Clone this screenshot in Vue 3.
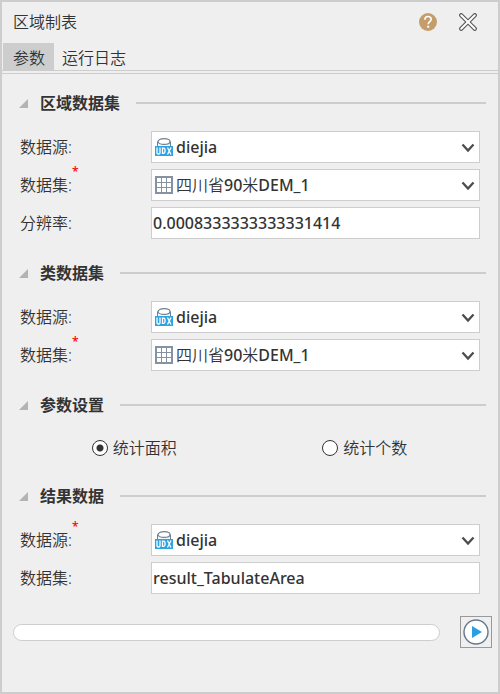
<script setup>
import { ref, reactive } from 'vue'

const tab = ref('params')
const stat = ref('area')
const sections = reactive([
  {
    id: 'zone',
    title: '区域数据集',
    fields: [
      { id: 'zone-source', label: '数据源:', kind: 'source', value: 'diejia' },
      { id: 'zone-dataset', label: '数据集:', kind: 'grid', value: '四川省90米DEM_1', required: true },
      { id: 'zone-res', label: '分辨率:', kind: 'text', value: '0.0008333333333331414' }
    ]
  },
  {
    id: 'class',
    title: '类数据集',
    fields: [
      { id: 'class-source', label: '数据源:', kind: 'source', value: 'diejia' },
      { id: 'class-dataset', label: '数据集:', kind: 'grid', value: '四川省90米DEM_1', required: true }
    ]
  },
  {
    id: 'options',
    title: '参数设置',
    radios: [
      { value: 'area', label: '统计面积' },
      { value: 'count', label: '统计个数' }
    ]
  },
  {
    id: 'result',
    title: '结果数据',
    fields: [
      { id: 'result-source', label: '数据源:', kind: 'source', value: 'diejia', required: true },
      { id: 'result-dataset', label: '数据集:', kind: 'text', value: 'result_TabulateArea' }
    ]
  }
])
</script>

<template>
  <main class="dialog">
    <header class="titlebar">
      <h1>区域制表</h1>
      <button class="icon-btn" type="button" aria-label="帮助">
        <svg width="18" height="18" viewBox="0 0 18 18">
          <circle cx="9" cy="9" r="9" fill="#c49d6b" />
          <path d="M5.9 6.7C5.9 4.6 7.1 3.5 9 3.5s3.2 1.1 3.2 2.8c0 2.3-3 2.4-3 5" fill="none" stroke="#fff" stroke-width="1.6" />
          <rect x="8.2" y="12.7" width="2" height="2" fill="#fff" />
        </svg>
      </button>
      <button class="icon-btn" type="button" aria-label="关闭">
        <svg width="18" height="18" viewBox="0 0 18 18" fill="none" stroke-linecap="round">
          <path d="M2.2 2.2l13.6 13.6M15.8 2.2L2.2 15.8" stroke="#555" stroke-width="4.2" />
          <path d="M2.2 2.2l13.6 13.6M15.8 2.2L2.2 15.8" stroke="#fff" stroke-width="2" />
        </svg>
      </button>
    </header>

    <nav class="tabs">
      <button type="button" :class="{ active: tab === 'params' }" @click="tab = 'params'">参数</button>
      <button type="button" :class="{ active: tab === 'log' }" @click="tab = 'log'">运行日志</button>
    </nav>

    <form class="panel" @submit.prevent>
      <section v-for="s in sections" :key="s.id">
        <h2>
          <svg width="9" height="9" viewBox="0 0 9 9"><path d="M9 0v9H0z" fill="#b3b3b3" /></svg>
          <span>{{ s.title }}</span>
        </h2>

        <div v-if="s.fields" class="rows">
          <div v-for="f in s.fields" :key="f.id" class="row">
            <div class="caption">
              <label :for="f.id">{{ f.label }}</label>
              <span v-if="f.required" class="star">*</span>
            </div>
            <input v-if="f.kind === 'text'" :id="f.id" v-model="f.value" class="field" type="text" />
            <div v-else class="combo">
              <select :id="f.id" v-model="f.value" class="field">
                <option>{{ f.value }}</option>
              </select>
              <svg v-if="f.kind === 'source'" class="lead" width="18" height="18" viewBox="0 0 18 18">
                <path d="M2.5 3.5v6h13v-6" fill="#f4f6f8" stroke="#6e7f91" />
                <ellipse cx="9" cy="3.5" rx="6" ry="2.9" fill="#fff" stroke="#6e7f91" stroke-width="1.2" />
                <rect y="8" width="18" height="10" fill="#2ea3e3" />
                <path
                  d="M2 9.5v5.2q0 1.3 1.5 1.3T5 14.7V9.5M7.5 10.2v5.1h1q1.5 0 1.5-1.5v-2.1q0-1.5-1.5-1.5zM12.5 9.5l3.5 7M16 9.5l-3.5 7"
                  fill="none" stroke="#fff" stroke-width="1.3"
                />
              </svg>
              <svg v-else class="lead" width="18" height="18" viewBox="0 0 18 18">
                <rect x="1" y="1" width="16" height="16" fill="#fff" stroke="#8492a3" stroke-width="2" />
                <path d="M6.5 1v16M11.5 1v16M1 6.5h16M1 11.5h16" stroke="#8492a3" />
              </svg>
              <svg class="arrow" width="14" height="10" viewBox="0 0 14 10">
                <path d="M1.5 1.5L7 7.5l5.5-6" fill="none" stroke="#4d4d4d" stroke-width="2.3" />
              </svg>
            </div>
          </div>
        </div>

        <div v-else class="radios">
          <label v-for="r in s.radios" :key="r.value">
            <input v-model="stat" type="radio" name="stat" :value="r.value" />
            <span>{{ r.label }}</span>
          </label>
        </div>
      </section>
    </form>

    <footer class="footer">
      <div class="progress" role="progressbar" aria-valuenow="0" aria-valuemin="0" aria-valuemax="100"></div>
      <button class="run" type="button" aria-label="运行">
        <svg width="26" height="26" viewBox="0 0 26 26">
          <circle cx="13" cy="13" r="12" fill="#fff" stroke="#66788c" stroke-width="1.4" />
          <path d="M9 7l10 6-10 6z" fill="#2a9fe0" />
        </svg>
      </button>
    </footer>
  </main>
</template>

<style>
body {
  margin: 0;
  background: #efefef;
}
</style>

<style scoped>
.dialog {
  box-sizing: border-box;
  min-height: 100vh;
  border: 2px solid #cdcdcd;
  background: #efefef;
  color: #333;
  font: 350 16px/22px "Noto Sans", "Noto Sans CJK SC", sans-serif;
}
.dialog * {
  box-sizing: border-box;
}
button,
input,
select {
  margin: 0;
  font: inherit;
  color: inherit;
}
button {
  padding: 0;
  border: 0;
  background: none;
}
svg {
  display: block;
  flex: none;
}
.titlebar {
  display: flex;
  align-items: center;
  gap: 22px;
  height: 41px;
  padding: 0 21px 2px 11px;
}
h1 {
  flex: 1;
  margin: 0;
  font-size: 16px;
  font-weight: inherit;
}
.tabs {
  display: flex;
  height: 31px;
  padding-left: 1px;
  border-bottom: 1px solid #cdcdcd;
  background: linear-gradient(#cdcdcd, #cdcdcd) 0 27px / 100% 1px no-repeat;
}
.tabs button {
  height: 28px;
  padding: 2px 8px 0;
}
.tabs .active {
  padding: 2px 9px 0 10px;
  background: #cdcdcd;
}
.panel {
  display: flex;
  flex-direction: column;
  gap: 23px;
  padding: 18px 12px 0 17px;
}
h2 {
  display: flex;
  align-items: center;
  gap: 12px;
  margin: 0 0 17px;
  font-size: 16px;
  line-height: 22px;
  font-weight: 700;
}
h2::after {
  content: "";
  flex: 1;
  height: 2px;
  margin-left: 4px;
  background: #cdcdcd;
}
.rows {
  display: grid;
  gap: 6px;
  padding: 0 6px 0 1px;
}
.row {
  display: grid;
  grid-template-columns: 131px 1fr;
  align-items: center;
  height: 32px;
}
.caption {
  display: flex;
  align-items: center;
  height: 32px;
}
.star {
  align-self: flex-start;
  color: #f00;
  font-size: 12px;
  font-weight: 500;
  line-height: 6px;
}
.field {
  display: block;
  width: 100%;
  height: 32px;
  padding: 0 1px;
  border: 1px solid #cdcdcd;
  border-radius: 0;
  outline: 0;
  background: #fff;
  font-family: "Noto Sans", "Noto Sans CJK SC DemiLight", "Noto Sans CJK SC Light", "Noto Sans CJK SC", sans-serif;
  font-weight: 500;
}
select.field {
  appearance: none;
  padding: 0 24px 0 24px;
}
.combo {
  position: relative;
}
.lead {
  position: absolute;
  top: 7px;
  left: 4px;
  pointer-events: none;
}
.arrow {
  position: absolute;
  top: 12px;
  right: 5px;
  pointer-events: none;
}
.radios {
  display: grid;
  grid-template-columns: 1fr 1fr;
  justify-items: center;
  align-items: center;
  height: 29px;
  padding-right: 6px;
}
.radios label {
  display: flex;
  align-items: center;
  gap: 5px;
}
.radios input {
  appearance: none;
  width: 16px;
  height: 16px;
  border: 1px solid #333;
  border-radius: 50%;
  background: #fff;
}
.radios input:checked {
  background: radial-gradient(circle, #333 3px, #fff 4px);
}
.footer {
  display: flex;
  align-items: center;
  gap: 20px;
  padding: 22px 6px 22px 11px;
}
.progress {
  flex: 1;
  height: 17px;
  border: 1px solid #cdcdcd;
  border-radius: 9px;
  background: #fff;
}
.run {
  display: grid;
  place-items: center;
  width: 32px;
  height: 32px;
  border: 1px solid #999;
}
</style>
